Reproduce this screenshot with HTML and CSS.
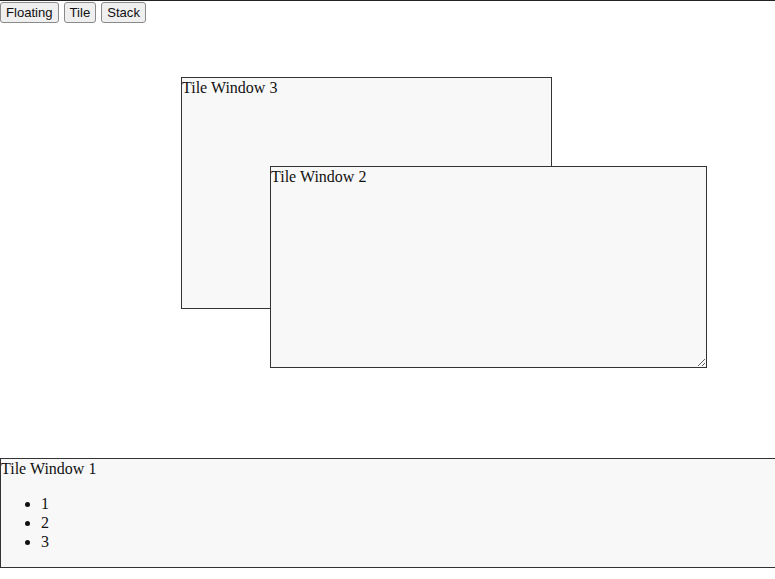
FILE: index.html
```html
<!DOCTYPE html>
<html>
<head>
<meta charset="utf-8">
<link rel="stylesheet" href="styles.css">
</head>
<body>
<div class="desktop">
  <div class="toolbar">
    <button class="btn">Floating</button>
    <button class="btn">Tile</button>
    <button class="btn">Stack</button>
  </div>
  <div class="win win3">Tile Window 3</div>
  <div class="win win2">Tile Window 2</div>
  <div class="win win1">Tile Window 1
    <ul class="list">
      <li>1</li>
      <li>2</li>
      <li>3</li>
    </ul>
  </div>
</div>
</body>
</html>
```
FILE: styles.css
```css
html, body {
  margin: 0;
  padding: 0;
  background: #fff;
}
body {
  font-family: "Liberation Serif", serif;
  font-size: 16px;
  line-height: 19px;
  color: #111;
  overflow: hidden;
}
.desktop {
  border-top: 1px solid #222;
  position: relative;
  height: 578px;
}
.toolbar {
  display: flex;
  gap: 5px;
  padding-top: 1px;
}
.btn {
  font-family: "Liberation Sans", Arial, sans-serif;
  font-size: 13.1px;
  line-height: 15px;
  margin: 0;
  padding: 2px 5px;
  border: 1px solid #8a8a8a;
  border-radius: 3px;
  background: #efefef;
  color: #111;
}
.win {
  position: absolute;
  background: #f8f8f8;
  border: 1px solid #333;
}
.win3 {
  left: 181px;
  top: 76px;
  width: 369px;
  height: 230px;
}
.win2 {
  left: 270px;
  top: 165px;
  width: 435px;
  height: 200px;
  overflow: auto;
  resize: both;
}
.win1 {
  left: 0;
  top: 457px;
  width: 100%;
}
.list {
  margin: 16px 0;
  padding-left: 40px;
}
```
